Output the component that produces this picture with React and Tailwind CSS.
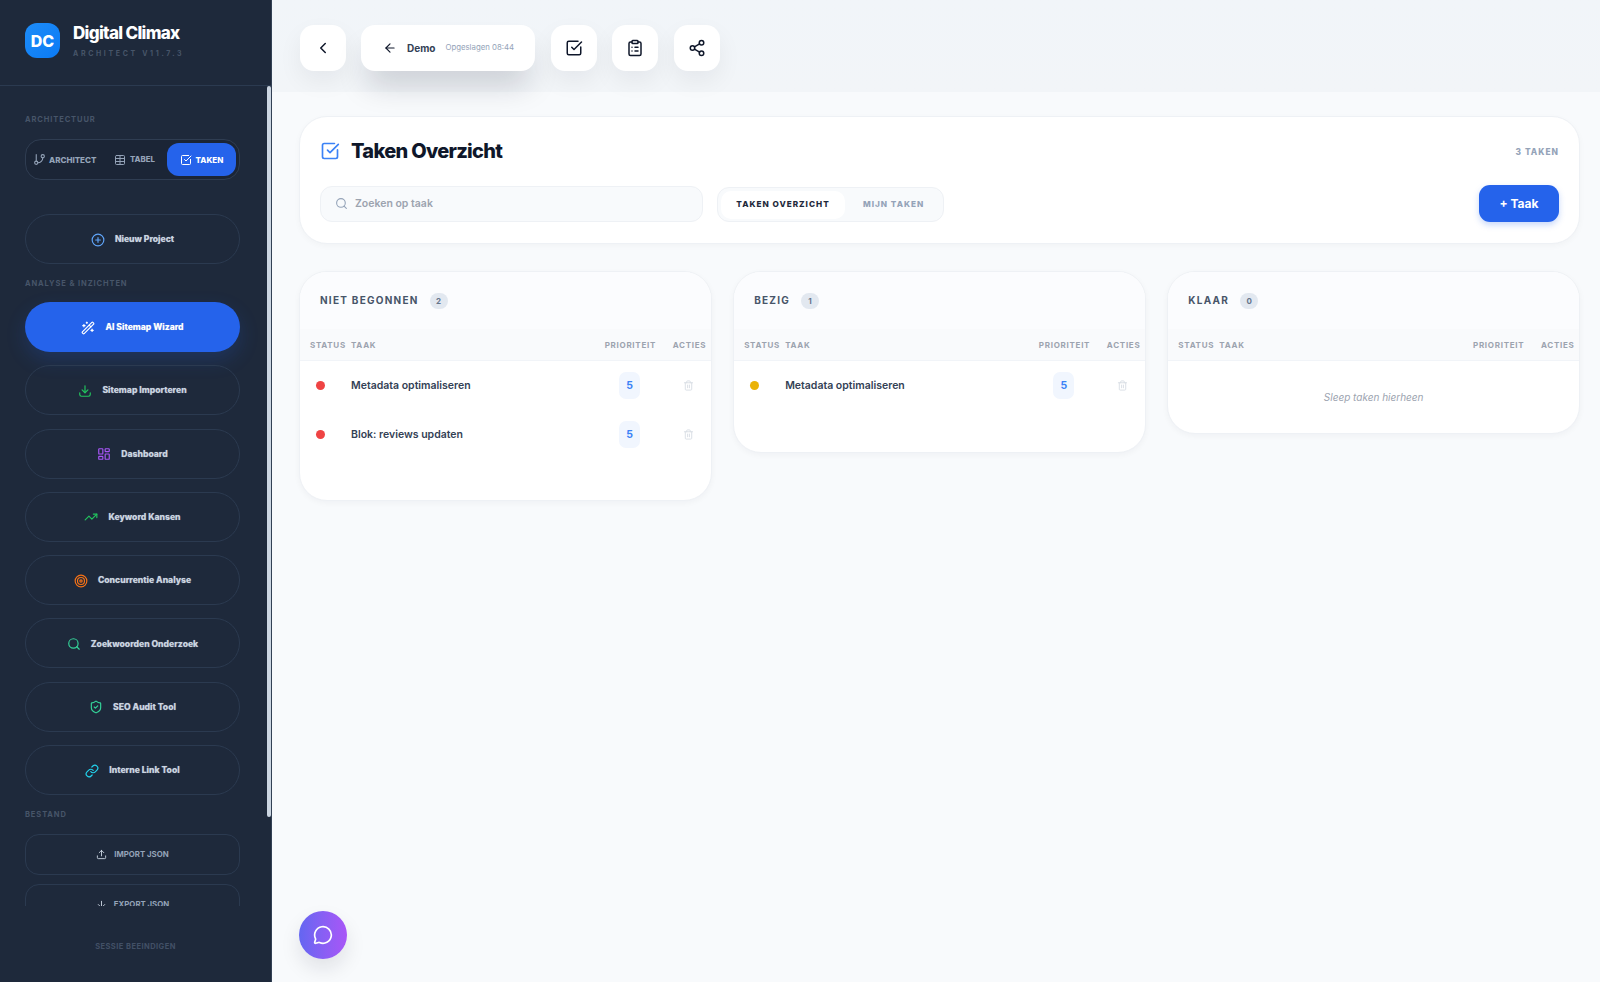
import React from "react";
import {
  GitBranch, Table, SquareCheckBig, CirclePlus, WandSparkles, LayoutDashboard, TrendingUp, Target,
  Search, ShieldCheck, Link, Upload, ArrowDown, MessageCircle, ChevronLeft, ArrowLeft, ClipboardList,
  Share2, Trash2,
} from "lucide-react";

function TrayDown({ className }) {
  return (
    <svg viewBox="0 0 24 24" fill="none" stroke="currentColor" strokeWidth="2" strokeLinecap="round" strokeLinejoin="round" className={className}>
      <path d="M12 3v12" />
      <path d="m7 10 5 5 5-5" />
      <path d="M3 15v3a3 3 0 0 0 3 3h12a3 3 0 0 0 3-3v-3" />
    </svg>
  );
}

function NavButton({ icon: Icon, color, label, active }) {
  return (
    <button
      className={
        active
          ? "w-[215px] h-[50px] shrink-0 pt-[1px] rounded-[25px] bg-[#2563eb] flex items-center justify-center gap-[10px] text-white text-[8.6px] font-extrabold shadow-[0_8px_20px_rgba(37,99,235,0.2)]"
          : "w-[215px] h-[50px] shrink-0 pt-[1px] rounded-[25px] border border-[#2b3a50] flex items-center justify-center gap-[10px] text-[#cbd5e1] text-[8.6px] font-extrabold"
      }
    >
      <Icon className={"w-[14px] h-[14px] " + color} strokeWidth={2} />
      <span className="[text-shadow:0_0_1px_rgba(203,213,225,0.5)]">{label}</span>
    </button>
  );
}

function Label({ children, className }) {
  return <div className={"text-[7.5px] font-bold tracking-[0.12em] text-[#475569] uppercase " + className}>{children}</div>;
}

function Sidebar() {
  return (
    <aside className="relative w-[272px] h-[982px] shrink-0 bg-[#1e293b] flex flex-col border-r border-[#334155]">
      <div className="h-[86px] shrink-0 border-b border-[#2b3a50] pl-[25px] pt-[23px] flex gap-[13px]">
        <div className="w-[35px] h-[35px] rounded-[12px] bg-gradient-to-br from-[#1d8cf8] to-[#0a7af5] flex items-center justify-center text-white text-[16px] font-extrabold">DC</div>
        <div className="flex flex-col">
          <div className="text-white text-[17px] leading-[20px] font-extrabold tracking-[-0.04em]">Digital Climax</div>
          <div className="text-[7px] leading-[10px] font-bold tracking-[0.38em] text-[#475569] mt-[6px]">ARCHITECT V11.7.3</div>
        </div>
      </div>
      <div className="flex-1 min-h-0 overflow-hidden pl-[25px] flex flex-col">
        <Label className="mt-[29px] leading-[10px]">Architectuur</Label>
        <div className="mt-[14px] w-[215px] h-[41px] shrink-0 rounded-[16px] border border-[#2f3d52] bg-[#1b2536] flex items-center pl-[7px] pr-[3px] text-[8px] font-extrabold text-[#94a3b8]">
          <div className="flex items-center gap-[3px] w-[81px]">
            <GitBranch className="w-[13px] h-[13px]" />
            <span>ARCHITECT</span>
          </div>
          <div className="flex items-center gap-[4px] w-[53px]">
            <Table className="w-[12px] h-[12px]" />
            <span className="text-[7.8px]">TABEL</span>
          </div>
          <div className="flex-1 h-[33px] rounded-[12px] bg-[#2563eb] text-white flex items-center justify-center gap-[4px]">
            <SquareCheckBig className="w-[12px] h-[12px]" />
            <span>TAKEN</span>
          </div>
        </div>
        <div className="mt-[34px]">
          <NavButton icon={CirclePlus} color="text-[#60a5fa]" label="Nieuw Project" />
        </div>
        <Label className="mt-[15px] leading-[10px]">Analyse &amp; Inzichten</Label>
        <div className="mt-[13px] flex flex-col gap-[13.3px]">
          <NavButton active icon={WandSparkles} color="text-white" label="AI Sitemap Wizard" />
          <NavButton icon={TrayDown} color="text-[#22c55e]" label="Sitemap Importeren" />
          <NavButton icon={LayoutDashboard} color="text-[#a855f7]" label="Dashboard" />
          <NavButton icon={TrendingUp} color="text-[#22c55e]" label="Keyword Kansen" />
          <NavButton icon={Target} color="text-[#f97316]" label="Concurrentie Analyse" />
          <NavButton icon={Search} color="text-[#34d399]" label="Zoekwoorden Onderzoek" />
          <NavButton icon={ShieldCheck} color="text-[#34d399]" label="SEO Audit Tool" />
          <NavButton icon={Link} color="text-[#22d3ee]" label="Interne Link Tool" />
        </div>
        <Label className="mt-[15px] leading-[10px]">Bestand</Label>
        <div className="mt-[14px] flex flex-col gap-[9px]">
          <button className="w-[215px] h-[41px] shrink-0 rounded-[14px] border border-[#2b3a50] flex items-center justify-center gap-[7px] text-[#94a3b8] text-[7.8px] font-bold">
            <Upload className="w-[11px] h-[11px] text-[#cbd5e1]" />
            <span>IMPORT JSON</span>
          </button>
          <button className="w-[215px] h-[41px] shrink-0 rounded-[14px] border border-[#2b3a50] flex items-center justify-center gap-[7px] text-[#94a3b8] text-[7.8px] font-bold">
            <ArrowDown className="w-[11px] h-[11px] text-[#cbd5e1]" />
            <span>EXPORT JSON</span>
          </button>
        </div>
      </div>
      <div className="h-[76px] shrink-0 flex items-center justify-center pt-[6px] text-[7.5px] font-bold tracking-[0.06em] text-[#425066]">SESSIE BEEINDIGEN</div>
      <div className="absolute right-0 top-[86px] w-[4px] h-[731px] rounded-full bg-[#cbd5e1]" />
    </aside>
  );
}

function ToolButton({ children, className = "" }) {
  return (
    <button className={"w-[46px] h-[46px] rounded-[14px] bg-white flex items-center justify-center text-[#0f172a] shadow-[0_10px_24px_rgba(15,23,42,0.06)] " + className}>
      {children}
    </button>
  );
}

function Header() {
  return (
    <header className="h-[92px] shrink-0 bg-gradient-to-b from-[#f1f5f9] to-[#f2f5f8] pl-[28px] pt-[25px] flex gap-[15px]">
      <ToolButton><ChevronLeft className="w-[18px] h-[18px]" strokeWidth={2} /></ToolButton>
      <div className="w-[174px] h-[46px] rounded-[14px] bg-white flex items-center pl-[22px] shadow-[0_20px_30px_-6px_rgba(15,23,42,0.18)]">
        <ArrowLeft className="w-[14px] h-[14px] text-[#0f172a]" />
        <span className="ml-[10px] text-[10px] font-bold text-[#334155]">Demo</span>
        <span className="ml-[10px] text-[7.8px] text-[#94a3b8]">Opgeslagen 08:44</span>
      </div>
      <ToolButton className="ml-px"><SquareCheckBig className="w-[18px] h-[18px]" strokeWidth={2} /></ToolButton>
      <ToolButton><ClipboardList className="w-[18px] h-[18px]" strokeWidth={2} /></ToolButton>
      <ToolButton className="ml-px"><Share2 className="w-[18px] h-[18px]" strokeWidth={2} /></ToolButton>
    </header>
  );
}

function TitleCard() {
  return (
    <section className="h-[128px] rounded-[28px] bg-white border border-[#eef1f5] shadow-[0_2px_6px_rgba(15,23,42,0.03)] px-[20px] flex flex-col">
      <div className="flex items-center justify-between h-[66px] pt-[1px] shrink-0">
        <div className="flex items-center gap-[11px]">
          <SquareCheckBig className="w-[20px] h-[20px] text-[#3b82f6]" strokeWidth={2} />
          <h1 className="text-[20px] font-extrabold tracking-[-0.035em] text-[#0f172a]">Taken Overzicht</h1>
        </div>
        <div className="mt-[4px] text-[8.4px] font-extrabold tracking-[0.12em] text-[#94a3b8]">3 TAKEN</div>
      </div>
      <div className="flex items-center mt-[2px]">
        <div className="w-[383px] h-[36px] rounded-[12px] bg-[#f8fafc] border border-[#eef1f5] flex items-center pl-[14px] gap-[7px]">
          <Search className="w-[13px] h-[13px] text-[#94a3b8]" />
          <span className="text-[10.5px] font-semibold text-[#9ca3af]">Zoeken op taak</span>
        </div>
        <div className="ml-[14px] mt-[2px] w-[227px] h-[35px] rounded-[12px] bg-[#f8fafc] border border-[#eef1f5] flex items-center pl-[3px]">
          <div className="w-[124px] h-[28px] rounded-[10px] bg-white flex items-center justify-center text-[8.2px] font-extrabold tracking-[0.12em] text-[#1e293b]">TAKEN OVERZICHT</div>
          <div className="ml-[6px] text-[8.2px] font-extrabold tracking-[0.12em] text-[#94a3b8] pl-[12px]">MIJN TAKEN</div>
        </div>
        <button className="ml-auto w-[80px] h-[37px] rounded-[11px] bg-[#2563eb] text-white text-[12px] font-bold shadow-[0_3px_6px_rgba(37,99,235,0.25)]">+ Taak</button>
      </div>
    </section>
  );
}

function Row({ color, title }) {
  return (
    <div className="grid grid-cols-[24px_1fr_51px_33px] gap-x-[17px] pl-[10px] pr-[5px] h-[49px] items-center">
      <div className="pl-[6px]"><div className="w-[9px] h-[9px] rounded-full" style={{ backgroundColor: color }} /></div>
      <div className="text-[10.5px] font-semibold text-[#334155]">{title}</div>
      <div className="flex justify-center pr-[1px]"><div className="w-[21px] h-[27px] rounded-[7px] bg-[#f1f6fe] flex items-center justify-center text-[10.5px] font-bold text-[#3b82f6]">5</div></div>
      <div className="flex justify-center pr-[1px]"><Trash2 className="w-[11px] h-[11px] text-[#d8dde4]" /></div>
    </div>
  );
}

function Column({ title, count, rows, pad, empty }) {
  return (
    <div className="rounded-[28px] bg-white border border-[#eef1f5] shadow-[0_2px_6px_rgba(15,23,42,0.04)] overflow-hidden">
      <div className="h-[57px] bg-[#fbfcfe] pl-[20px] flex items-center gap-[11px]">
        <span className="text-[10px] font-bold tracking-[0.125em] text-[#475569]">{title}</span>
        <span className="w-[18px] h-[16px] rounded-full bg-[#e2e8f0] flex items-center justify-center text-[8px] font-bold text-[#64748b]">{count}</span>
      </div>
      <div className="grid grid-cols-[24px_1fr_51px_33px] gap-x-[17px] pl-[10px] pr-[5px] h-[32px] items-center bg-[#f9fafc] border-b border-[#f1f4f8] text-[8px] font-bold tracking-[0.09em] text-[#9ca3af]">
        <span>STATUS</span>
        <span>TAAK</span>
        <span className="text-center">PRIORITEIT</span>
        <span className="text-center">ACTIES</span>
      </div>
      {rows.map((r, i) => <Row key={i} {...r} />)}
      {empty ? (
        <div className="h-[72px] flex items-center justify-center text-[10px] italic text-[#9ca3af]">Sleep taken hierheen</div>
      ) : (
        <div style={{ height: pad }} />
      )}
    </div>
  );
}

export default function App() {
  return (
    <div className="relative w-[1600px] h-[982px] overflow-hidden flex bg-[#f8fafc] font-['Inter','Liberation_Sans',sans-serif]">
      <Sidebar />
      <main className="flex-1 min-w-0 flex flex-col">
        <Header />
        <div className="pl-[27px] pr-[20px] pt-[24px] flex flex-col gap-[27px]">
          <TitleCard />
          <div className="grid grid-cols-3 gap-x-[21.5px] items-start">
            <Column title="NIET BEGONNEN" count="2" pad={41} rows={[{ color: "#ef4444", title: "Metadata optimaliseren" }, { color: "#ef4444", title: "Blok: reviews updaten" }]} />
            <Column title="BEZIG" count="1" pad={42} rows={[{ color: "#eab308", title: "Metadata optimaliseren" }]} />
            <Column title="KLAAR" count="0" rows={[]} empty />
          </div>
        </div>
      </main>
      <button className="absolute left-[299px] top-[911px] w-[48px] h-[48px] rounded-full bg-gradient-to-r from-[#6366f1] to-[#a855f7] flex items-center justify-center text-white shadow-[0_10px_20px_rgba(15,23,42,0.1)]">
        <MessageCircle className="w-[20px] h-[20px]" strokeWidth={2} />
      </button>
    </div>
  );
}
